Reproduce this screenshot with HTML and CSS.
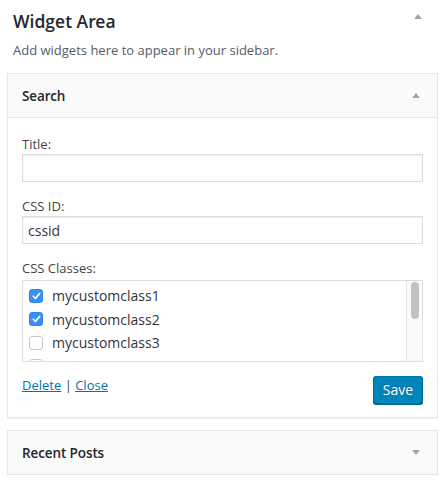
FILE: index.html
```html
<!DOCTYPE html>
<html lang="en">
<head>
<meta charset="utf-8">
<title>Widget Area</title>
<link rel="stylesheet" href="styles.css">
</head>
<body>
<div class="sidebar">
  <div class="sidebar-head">
    <h2 class="sidebar-title">Widget Area</h2>
    <svg class="arrow" width="8" height="5" viewBox="0 0 8 5"><polygon points="0,5 4,0 8,5"/></svg>
  </div>
  <p class="sidebar-desc">Add widgets here to appear in your sidebar.</p>

  <div class="widget">
    <div class="widget-top">
      <h3 class="widget-title">Search</h3>
      <svg class="arrow" width="8" height="5" viewBox="0 0 8 5"><polygon points="0,5 4,0 8,5"/></svg>
    </div>
    <div class="widget-inside">
      <div class="field">
        <label class="field-label">Title:</label>
        <input class="text-input" type="text" value="">
      </div>
      <div class="field">
        <label class="field-label">CSS ID:</label>
        <input class="text-input" type="text" value="cssid">
      </div>
      <div class="field">
        <label class="field-label">CSS Classes:</label>
        <div class="listbox">
          <div class="options">
            <label class="option"><span class="check checked"><svg width="9" height="8" viewBox="0 0 9 8"><path d="M1.2 4.2 L3.4 6.4 L7.8 1.4" fill="none" stroke="#fff" stroke-width="1.6" stroke-linecap="round" stroke-linejoin="round"/></svg></span>mycustomclass1</label>
            <label class="option"><span class="check checked"><svg width="9" height="8" viewBox="0 0 9 8"><path d="M1.2 4.2 L3.4 6.4 L7.8 1.4" fill="none" stroke="#fff" stroke-width="1.6" stroke-linecap="round" stroke-linejoin="round"/></svg></span>mycustomclass2</label>
            <label class="option"><span class="check"></span>mycustomclass3</label>
            <label class="option"><span class="check"></span>mycustomclass4</label>
          </div>
          <div class="scrollbar"><div class="thumb"></div></div>
        </div>
      </div>
      <div class="actions">
        <span class="links"><a href="#" class="link">Delete</a> | <a href="#" class="link">Close</a></span>
        <button class="save-btn" type="button">Save</button>
      </div>
    </div>
  </div>

  <div class="widget">
    <div class="widget-top">
      <h3 class="widget-title">Recent Posts</h3>
      <svg class="arrow" width="8" height="5" viewBox="0 0 8 5"><polygon points="0,0 8,0 4,5"/></svg>
    </div>
  </div>
</div>
</body>
</html>
```

FILE: styles.css
```css
* { box-sizing: border-box; }

html, body {
  margin: 0;
  padding: 0;
  background: #ffffff;
}

body {
  font-family: "Open Sans", "Noto Sans", sans-serif;
  color: #23282d;
  font-size: 13px;
}

.sidebar {
  padding: 0 7px;
}

.sidebar-head {
  display: flex;
  justify-content: space-between;
  align-items: center;
  padding: 8px 16px 0 6px;
}

.sidebar-title {
  margin: 0;
  font-family: "Open Sans SemiBold", "Open Sans", "Noto Sans", sans-serif;
  font-size: 17.5px;
  font-weight: 600;
  line-height: 26px;
  color: #23282d;
}

.arrow {
  display: block;
  fill: #a0a5aa;
}

.sidebar-head .arrow {
  margin-top: -9px;
}

.sidebar-desc {
  margin: 7px 0 0 6px;
  font-size: 13px;
  line-height: 18px;
  color: #555d66;
}

.widget {
  margin-top: 14px;
  border: 1px solid #e5e5e5;
  background: #ffffff;
  box-shadow: 0 1px 1px rgba(0, 0, 0, 0.04);
}

.widget + .widget {
  margin-top: 12px;
}

.widget-top {
  display: flex;
  justify-content: space-between;
  align-items: center;
  height: 43px;
  padding: 0 17px 0 14px;
  background: #fafafa;
}

.widget-title {
  margin: 0;
  font-family: "Open Sans SemiBold", "Open Sans", "Noto Sans", sans-serif;
  font-size: 13.5px;
  font-weight: 600;
  letter-spacing: -0.1px;
  line-height: 18px;
  color: #23282d;
}

.widget-inside {
  border-top: 1px solid #e5e5e5;
  padding: 17px 14px 13px;
  display: flex;
  flex-direction: column;
  gap: 15px;
}

.field {
  display: flex;
  flex-direction: column;
}

.field-label {
  font-size: 13px;
  line-height: 18px;
  color: #444444;
  margin-bottom: 1px;
}

.text-input {
  display: block;
  width: 100%;
  height: 28px;
  margin: 0;
  padding: 0 5px;
  border: 1px solid #dddddd;
  border-radius: 0;
  box-shadow: inset 0 1px 2px rgba(0, 0, 0, 0.07);
  background: #ffffff;
  font-family: "Open Sans", "Noto Sans", sans-serif;
  font-size: 14px;
  color: #32373c;
  outline: none;
}

.listbox {
  margin-top: 2px;
  height: 82px;
  border: 1px solid #dddddd;
  display: flex;
  overflow: hidden;
  background: #ffffff;
}

.options {
  flex: 1;
  padding: 3px 0 0 6px;
  overflow: hidden;
}

.scrollbar {
  flex: none;
  width: 16px;
  background: #fafafa;
  border-left: 1px solid #e8e8e8;
  padding: 1px 3px 0 4px;
}

.thumb {
  height: 37px;
  border-radius: 4px;
  background: #c2c2c2;
}

.option {
  display: flex;
  align-items: center;
  height: 23.5px;
  font-size: 14px;
  color: #32373c;
  white-space: nowrap;
}

.check {
  flex: none;
  display: flex;
  align-items: center;
  justify-content: center;
  width: 14px;
  height: 14px;
  margin-right: 9px;
  border: 1px solid #c8c8c8;
  border-radius: 3px;
  background: #ffffff;
}

.check.checked {
  border-color: #2f87f0;
  background: #3a8ff4;
}

.actions {
  display: flex;
  justify-content: space-between;
  align-items: flex-start;
  margin-top: -1px;
}

.links {
  font-size: 13px;
  line-height: 18px;
  color: #444444;
  margin-top: 0;
}

.link {
  color: #0073aa;
  text-decoration: underline;
}

.save-btn {
  width: 50px;
  height: 28px;
  margin: 0;
  padding: 0;
  border: 1px solid #0073aa;
  border-color: #0073aa #006799 #006799;
  border-radius: 3px;
  background: #0085ba;
  box-shadow: 0 1px 0 #006799;
  color: #ffffff;
  font-family: "Open Sans", "Noto Sans", sans-serif;
  font-size: 14px;
  line-height: 26px;
  text-shadow: 0 -1px 1px #006799;
}
```
